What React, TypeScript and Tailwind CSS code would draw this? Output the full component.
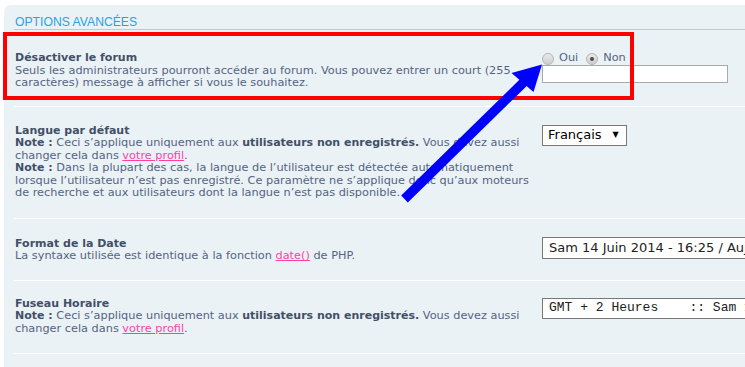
import React from "react";

const txt = "text-[#536482] text-[11.3px]";
const strong = "font-bold text-[#425067] text-[11px]";

function Link({ children }: { children: React.ReactNode }) {
  return <span className="text-[#ff3fa6] underline">{children}</span>;
}

function Radio({ checked }: { checked?: boolean }) {
  return (
    <span className="inline-flex h-[12px] w-[12px] items-center justify-center rounded-full border border-[#b5b5b5] bg-gradient-to-b from-[#e9e9e9] to-[#cfcfcf]">
      {checked && <span className="h-[4px] w-[4px] rounded-full bg-[#4a4a4a]" />}
    </span>
  );
}

export default function App() {
  return (
    <div
      className="relative h-[367px] w-[745px] overflow-hidden bg-white pl-[4px] pt-[5px]"
      style={{ fontFamily: '"DejaVu Sans", Verdana, sans-serif' }}
    >
      <div className="h-[400px] rounded-tl-[7px] bg-[#ebf2f6] pl-[10px] pt-[10px]">
        <div
          className="border-b border-[#c4c8cc] pl-[1px] text-[12.2px] leading-[14px] text-[#2b9fe6]"
          style={{ fontFamily: '"Liberation Sans", Arial, sans-serif' }}
        >
          OPTIONS AVANCÉES
        </div>

        {/* Row 1 */}
        <div className="flex border-b border-white pb-[16px] pl-[1px] pt-[22px] text-[11px] leading-[12.5px]">
          <div className="w-[527px] shrink-0 whitespace-nowrap">
            <div className={strong}>Désactiver le forum</div>
            <div className={txt}>
              Seuls les administrateurs pourront accéder au forum. Vous pouvez entrer un court (255
              <br />
              caractères) message à afficher si vous le souhaitez.
            </div>
          </div>
          <div className="flex flex-col">
            <div className={`flex h-[13px] items-center ${txt}`}>
              <Radio />
              <span className="ml-[5px]">Oui</span>
              <span className="ml-[8px] flex items-center">
                <Radio checked />
              </span>
              <span className="ml-[5px]">Non</span>
            </div>
            <div className="h-[18px] w-[186px] border border-[#aaaaaa] bg-white" />
          </div>
        </div>

        {/* Row 2 */}
        <div className="flex border-b border-white pb-[18px] pl-[1px] pt-[18px] text-[11px] leading-[12.5px]">
          <div className={`w-[527px] shrink-0 whitespace-nowrap ${txt}`}>
            <div className={strong}>Langue par défaut</div>
            <div>
              <span className={strong}>Note :</span> Ceci s’applique uniquement aux{" "}
              <span className={strong}>utilisateurs non enregistrés.</span> Vous devez aussi
              <br />
              changer cela dans <Link>votre profil</Link>.
              <br />
              <span className={strong}>Note :</span> Dans la plupart des cas, la langue de l’utilisateur est détectée automatiquement
              <br />
              lorsque l’utilisateur n’est pas enregistré. Ce paramètre ne s’applique donc qu’aux moteurs
              <br />
              de recherche et aux utilisateurs dont la langue n’est pas disponible.
            </div>
          </div>
          <div>
            <div className="flex h-[21px] w-[85px] items-center border border-[#777777] bg-white pl-[5px] text-[13px] text-black">
              <span>Français</span>
              <span className="ml-[11px] text-[8px]">▼</span>
            </div>
          </div>
        </div>

        {/* Row 3 */}
        <div className="flex border-b border-white pb-[17px] pl-[1px] pt-[19px] text-[11px] leading-[12.5px]">
          <div className={`w-[527px] shrink-0 whitespace-nowrap ${txt}`}>
            <div className={strong}>Format de la Date</div>
            <div>
              La syntaxe utilisée est identique à la fonction <Link>date()</Link> de PHP.
            </div>
          </div>
          <div>
            <div className="mt-[-0.5px] flex h-[22px] w-[260px] items-center overflow-hidden whitespace-nowrap border border-[#777777] bg-white pl-[6px] text-[13px] text-[#222]">
              Sam 14 Juin 2014 - 16:25 / Aujourd’hui
            </div>
          </div>
        </div>

        {/* Row 4 */}
        <div className="flex border-b border-white pb-[18px] pl-[1px] pt-[17px] text-[11px] leading-[12.5px]">
          <div className={`w-[527px] shrink-0 whitespace-nowrap ${txt}`}>
            <div className={strong}>Fuseau Horaire</div>
            <div>
              <span className={strong}>Note :</span> Ceci s’applique uniquement aux{" "}
              <span className={strong}>utilisateurs non enregistrés.</span> Vous devez aussi
              <br />
              changer cela dans <Link>votre profil</Link>.
            </div>
          </div>
          <div>
            <div
              className="flex h-[21px] w-[260px] items-center overflow-hidden whitespace-pre border border-[#777777] bg-white pl-[6px] text-[13px] text-[#222]"
              style={{ fontFamily: '"Liberation Mono", "Courier New", monospace' }}
            >
              {"GMT + 2 Heures    :: Sam 14 Juin"}
            </div>
          </div>
        </div>
      </div>

      {/* Annotation: red box */}
      <div className="absolute left-[3px] top-[32px] h-[68px] w-[631px] border-[4px] border-[#ff0000]" />

      {/* Annotation: blue arrow */}
      <svg className="absolute left-0 top-0" width="745" height="367" viewBox="0 0 745 367">
        <line x1="404.5" y1="199" x2="525" y2="81" stroke="#0000ff" strokeWidth="9.5" />
        <polygon points="542,64.5 511.5,73 533.5,92" fill="#0000ff" />
      </svg>
    </div>
  );
}
